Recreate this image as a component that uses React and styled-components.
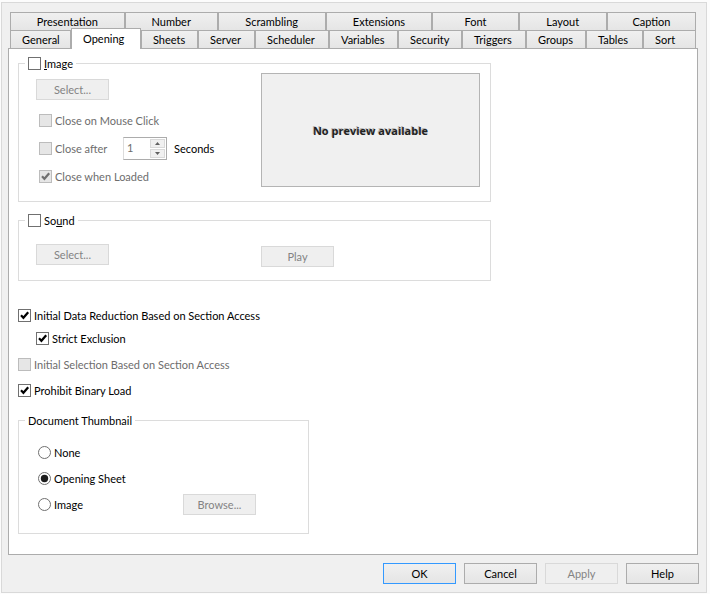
import React, { useState } from 'react';
import styled, { createGlobalStyle, css } from 'styled-components';

const GlobalStyle = createGlobalStyle`
  * { box-sizing: border-box; }
  body {
    margin: 0;
    background: #fcfcfc;
    color: #000;
    font: 11px/15px Lato, "Liberation Sans", sans-serif;
  }
  button, input { font: inherit; color: inherit; }
`;

const Dialog = styled.main`
  margin: 2px 3px 1px 1px;
  padding: 9px 8px 8px 6px;
  background: #f0f0f0;
  border: 1px solid #d9d9d9;
`;

const TabRow = styled.div`
  display: flex;
  height: 18px;
  margin: 0 2px;
`;

const Tab = styled.button`
  flex: ${props => props.$grow || 0} 0 ${props => props.$width || 0}px;
  min-width: 0;
  padding: 0 0 0 ${props => (props.$centered ? 0 : 11)}px;
  text-align: ${props => (props.$centered ? 'center' : 'left')};
  white-space: nowrap;
  background: linear-gradient(#f0f0f0, #e5e5e5);
  border: 1px solid #acacac;
  border-bottom: 0;

  ${props => props.$active && css`
    position: relative;
    height: 21px;
    margin-top: -2px;
    padding-bottom: 2px;
    background: #fff;
  `}
`;

const Panel = styled.section`
  padding: 7px 9px 20px;
  background: #fff;
  border: 1px solid #acacac;
`;

const Group = styled.fieldset`
  width: ${props => props.$width}px;
  max-width: 100%;
  min-width: 0;
  margin: ${props => props.$top || 0}px 0 0;
  padding: 0 10px 0 6px;
  border: 1px solid #dcdcdc;
`;

const Legend = styled.legend`
  height: 15px;
  padding: 0 3px;
`;

const GroupBody = styled.div`
  display: flex;
  padding: ${props => props.$top}px 0 ${props => props.$bottom}px 11px;
`;

const Column = styled.div`
  flex: none;
  width: ${props => props.$width || 225}px;
  padding-top: ${props => props.$top || 0}px;
`;

const Row = styled.div`
  display: flex;
  align-items: center;
  height: ${props => props.$height}px;
  margin-bottom: 1px;
  padding-left: ${props => props.$indent}px;
`;

const Options = styled.div`
  margin-top: 7px;
`;

const Stack = styled.div`
  display: flex;
  flex-direction: column;
  align-items: flex-start;
  gap: ${props => props.$gap}px;
  margin-top: ${props => props.$top || 0}px;
`;

const Label = styled.label`
  display: inline-flex;
  align-items: center;
  gap: 3px;
  min-width: ${props => props.$minWidth || 0}px;
  height: 15px;
  margin-left: ${props => props.$indent || 0}px;
  white-space: pre;
  color: ${props => (props.$disabled ? '#6d6d6d' : '#000')};
`;

const Mark = styled.span`
  display: grid;
  width: 13px;
  height: 13px;

  > * { grid-area: 1 / 1; }
`;

const Tick = styled.svg`
  visibility: hidden;
  pointer-events: none;
`;

const Box = styled.input`
  appearance: none;
  width: 13px;
  height: 13px;
  margin: 0;
  background: #fff;
  border: 1px solid #707070;
  border-radius: ${props => (props.type === 'radio' ? '50%' : 0)};

  &:disabled { background: #e6e6e6; border-color: #bcbcbc; }
  &:checked + ${Tick} { visibility: visible; }
`;

const Button = styled.button`
  flex: none;
  width: 73px;
  height: 21px;
  padding: 0;
  background: linear-gradient(#f0f0f0, #e5e5e5);
  border: 1px solid ${props => (props.$primary ? '#3399ff' : '#acacac')};

  &:disabled {
    color: #838383;
    background: #efefef;
    border-color: #d9d9d9;
  }
`;

const PlayButton = styled(Button)`
  margin-top: 2px;
`;

const BrowseButton = styled(Button)`
  margin-left: auto;
`;

const Spinner = styled.div`
  display: flex;
  width: 44px;
  height: 23px;
  margin-right: 7px;
  border: 1px solid #acacac;
  border-left-color: #dcdcdc;
`;

const SpinnerInput = styled.input`
  width: 25px;
  padding: 0 0 2px 3px;
  color: #6d6d6d;
  background: #fff;
  border: 0;
`;

const Arrows = styled.div`
  display: grid;
  flex: 1;
  grid-template-rows: 1fr 1fr;
  gap: 1px;
  padding: 1px;
  background: #fff;
`;

const Arrow = styled.button`
  display: grid;
  place-items: center;
  padding: 0;
  background: #f0f0f0;
  border: 1px solid #d9d9d9;
`;

const Preview = styled.div`
  display: grid;
  flex: 1;
  place-items: center;
  height: 114px;
  background: #f0f0f0;
  border: 1px solid #b4b4b4;
  color: #222;
  font: bold 11px/15px "Open Sans", sans-serif;
  text-shadow: -1px -1px #bbb;
`;

const Footer = styled.footer`
  display: flex;
  justify-content: flex-end;
  gap: 8px;
  margin: 8px -1px 0 0;
`;

const Check = ({ children, disabled, indent, minWidth, ...props }) => (
  <Label $disabled={disabled} $indent={indent} $minWidth={minWidth}>
    <Mark>
      <Box type="checkbox" disabled={disabled} {...props} />
      <Tick width="13" height="13" viewBox="0 0 13 13">
        <path
          d="M3 6.3 5.4 8.8 10.2 3.2"
          fill="none"
          stroke={disabled ? '#707070' : '#000'}
          strokeWidth="2.2"
        />
      </Tick>
    </Mark>
    <span>{children}</span>
  </Label>
);

const Radio = ({ children, ...props }) => (
  <Label>
    <Mark>
      <Box type="radio" name="thumbnail" {...props} />
      <Tick width="13" height="13" viewBox="0 0 13 13">
        <circle cx="6.5" cy="6.5" r="3.7" fill="#1c1c1c" />
      </Tick>
    </Mark>
    <span>{children}</span>
  </Label>
);

const topTabs = [
  ['Presentation', 115],
  ['Number', 93],
  ['Scrambling', 108],
  ['Extensions', 107],
  ['Font', 86],
  ['Layout', 88],
  ['Caption', 89],
];

const bottomTabs = [
  ['General', 61],
  ['Opening', 70],
  ['Sheets', 57],
  ['Server', 57],
  ['Scheduler', 74],
  ['Variables', 69],
  ['Security', 64],
  ['Triggers', 64],
  ['Groups', 60],
  ['Tables', 57],
  ['Sort', 52],
];

export default function App() {
  const [tab, setTab] = useState('Opening');

  return (
    <>
      <GlobalStyle />
      <Dialog>
        <TabRow>
          {topTabs.map(([name, width]) => (
            <Tab key={name} type="button" $centered $grow={width}>{name}</Tab>
          ))}
        </TabRow>
        <TabRow>
          {bottomTabs.map(([name, width]) => (
            <Tab
              key={name}
              type="button"
              $width={width}
              $grow={name === 'Sort' ? 1 : 0}
              $active={name === tab}
              onClick={() => setTab(name)}
            >
              {name}
            </Tab>
          ))}
        </TabRow>

        <Panel>
          <Group $width={473}>
            <Legend><Check><u>I</u>mage</Check></Legend>
            <GroupBody $top={2} $bottom={10}>
              <Column $top={6}>
                <Button type="button" disabled>Select...</Button>
                <Options>
                  <Row $height={27} $indent={3}>
                    <Check disabled>Close on Mouse Click</Check>
                  </Row>
                  <Row $height={27} $indent={3}>
                    <Check disabled minWidth={84}>Close after</Check>
                    <Spinner>
                      <SpinnerInput id="seconds" defaultValue="1" disabled />
                      <Arrows>
                        <Arrow type="button" aria-label="Increase" disabled>
                          <svg width="5" height="3" viewBox="0 0 5 3"><path d="M0 3 2.5 0 5 3z" fill="#606060" /></svg>
                        </Arrow>
                        <Arrow type="button" aria-label="Decrease" disabled>
                          <svg width="5" height="3" viewBox="0 0 5 3"><path d="M0 0 2.5 3 5 0z" fill="#606060" /></svg>
                        </Arrow>
                      </Arrows>
                    </Spinner>
                    <label htmlFor="seconds">Seconds</label>
                  </Row>
                  <Row $height={27} $indent={3}>
                    <Check disabled defaultChecked>Close when Loaded</Check>
                  </Row>
                </Options>
              </Column>
              <Preview>No preview available</Preview>
            </GroupBody>
          </Group>

          <Group $width={473} $top={11}>
            <Legend><Check>So<u>u</u>nd</Check></Legend>
            <GroupBody $top={16} $bottom={13}>
              <Column>
                <Button type="button" disabled>Select...</Button>
              </Column>
              <PlayButton type="button" disabled>Play</PlayButton>
            </GroupBody>
          </Group>

          <Stack $gap={11} $top={27}>
            <Stack $gap={8}>
              <Check defaultChecked>Initial Data Reduction Based on Section Access</Check>
              <Check defaultChecked indent={18}>Strict Exclusion</Check>
            </Stack>
            <Check disabled>Initial Selection Based on Section Access</Check>
            <Check defaultChecked>Prohibit Binary Load</Check>
          </Stack>

          <Group $width={291} $top={15}>
            <Legend>Document Thumbnail</Legend>
            <GroupBody $top={12} $bottom={15}>
              <Column $width={220}>
                <Row $height={25} $indent={2}><Radio>None</Radio></Row>
                <Row $height={25} $indent={2}><Radio defaultChecked>Opening Sheet</Radio></Row>
                <Row $height={25} $indent={2}>
                  <Radio>Image</Radio>
                  <BrowseButton type="button" disabled>Browse...</BrowseButton>
                </Row>
              </Column>
            </GroupBody>
          </Group>
        </Panel>

        <Footer>
          <Button type="button" $primary>OK</Button>
          <Button type="button">Cancel</Button>
          <Button type="button" disabled>Apply</Button>
          <Button type="button">Help</Button>
        </Footer>
      </Dialog>
    </>
  );
}
